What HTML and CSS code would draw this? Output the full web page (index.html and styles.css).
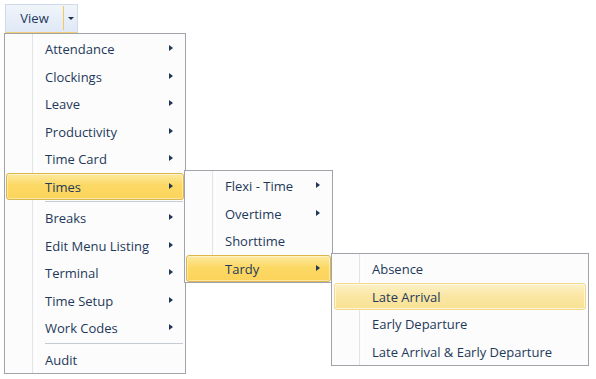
FILE: index.html
```html
<!DOCTYPE html>
<html lang="en">
<head>
    <meta charset="UTF-8">
    <meta name="viewport" content="width=device-width, initial-scale=1.0">
    <title>View Menu</title>
    <link rel="stylesheet" href="styles.css">
</head>
<body>
    <div class="toolbar">
        <div class="split-button">
            <span class="split-label">View</span>
            <span class="split-drop"><span class="down-arrow"></span></span>
        </div>
    </div>

    <!-- main View menu -->
    <ul class="menu menu-main">
        <li class="item has-sub">Attendance</li>
        <li class="item has-sub">Clockings</li>
        <li class="item has-sub">Leave</li>
        <li class="item has-sub">Productivity</li>
        <li class="item has-sub">Time Card</li>
        <li class="item has-sub open">Times</li>
        <li class="separator"></li>
        <li class="item has-sub">Breaks</li>
        <li class="item has-sub">Edit Menu Listing</li>
        <li class="item has-sub">Terminal</li>
        <li class="item has-sub">Time Setup</li>
        <li class="item has-sub">Work Codes</li>
        <li class="separator"></li>
        <li class="item">Audit</li>
    </ul>

    <!-- Times submenu -->
    <ul class="menu menu-times">
        <li class="item has-sub">Flexi - Time</li>
        <li class="item has-sub">Overtime</li>
        <li class="item">Shorttime</li>
        <li class="item has-sub open">Tardy</li>
    </ul>

    <!-- Tardy submenu -->
    <ul class="menu menu-tardy">
        <li class="item">Absence</li>
        <li class="item hover">Late Arrival</li>
        <li class="item">Early Departure</li>
        <li class="item">Late Arrival &amp; Early Departure</li>
    </ul>
</body>
</html>
```

FILE: styles.css
```css
* {
    margin: 0;
    padding: 0;
    box-sizing: border-box;
}

:root {
    --text: #1e395b;
    --border: #a0a4aa;
    --gutter: #e2e4e7;
}

body {
    background: white;
    font-family: 'Open Sans', 'Noto Sans', sans-serif;
    font-size: 13px;
    color: var(--text);
    width: 596px;
    height: 379px;
    position: relative;
    overflow: hidden;
}

.toolbar {
    padding: 4px 0 0 5px;
}

.split-button {
    display: flex;
    width: 73px;
    height: 29px;
    background: linear-gradient(#f1f5fb, #dfe8f5);
    border: 1px solid #d0dbea;
    border-bottom: 1px solid #f2cf73;
}

.split-label {
    width: 58px;
    display: flex;
    align-items: center;
    justify-content: center;
    font-size: 13px;
    border-right: 1px solid #f4c95a;
    margin: 1px 0 2px;
}

.split-drop {
    flex: 1;
    display: flex;
    align-items: center;
    justify-content: center;
}

.down-arrow {
    width: 0;
    height: 0;
    border-left: 3px solid transparent;
    border-right: 3px solid transparent;
    border-top: 3px solid #1e2f4a;
}

/* popup menus */
.menu {
    position: absolute;
    list-style: none;
    background: #fcfcfc;
    border: 1px solid var(--border);
    padding: 1px 0 0;
}

.menu::before {
    content: '';
    position: absolute;
    top: 0;
    bottom: 0;
    left: 27px;
    width: 2px;
    border-left: 1px solid var(--gutter);
    border-right: 1px solid white;
}

.menu-main {
    left: 4px;
    top: 33px;
    width: 182px;
}

.menu-times {
    left: 184px;
    top: 170px;
    width: 149px;
}

.menu-tardy {
    left: 331px;
    top: 253px;
    width: 258px;
}

.item {
    position: relative;
    height: 27.5px;
    line-height: 26.5px;
    margin: 0 1px;
    padding-left: 38px;
    border: 1px solid transparent;
    border-radius: 3px;
    white-space: nowrap;
}

.has-sub::after {
    content: '';
    position: absolute;
    right: 10px;
    top: 9px;
    border-top: 3.5px solid transparent;
    border-bottom: 3.5px solid transparent;
    border-left: 4px solid #1e3557;
}

.item.open {
    z-index: 1;
    background: linear-gradient(#fde99f, #fcd965 45%, #fbd35b);
    border-color: #dcb54c;
    box-shadow: inset 0 0 0 1px rgba(255, 255, 255, 0.45);
}

.item.hover {
    z-index: 1;
    margin: 0 2px;
    padding-left: 37px;
    background: linear-gradient(#fcf0c6, #fae6a3 50%, #f9e294);
    border-color: #f3da8d;
    box-shadow: inset 0 0 0 1px rgba(255, 255, 255, 0.6);
}

.separator {
    position: relative;
    z-index: 1;
    height: 4px;
    margin: 0 2px 0 40px;
    border-top: 1px solid transparent;
}

.separator::after {
    content: '';
    display: block;
    height: 2px;
    border-top: 1px solid #c5ccd6;
    border-bottom: 1px solid white;
}
```
